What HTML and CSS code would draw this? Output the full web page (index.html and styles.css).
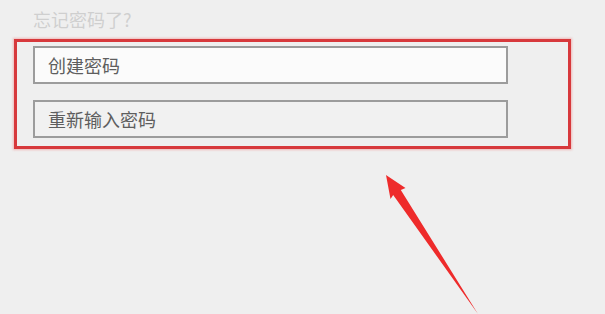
FILE: index.html
```html
<!DOCTYPE html>
<html lang="zh-CN">
<head>
<meta charset="utf-8">
<link rel="stylesheet" href="styles.css">
</head>
<body>
<div class="page">
  <div class="forgot">忘记密码了?</div>
  <div class="highlight">
    <div class="field field-active">创建密码</div>
    <div class="field">重新输入密码</div>
  </div>
  <svg class="arrow" width="605" height="314" viewBox="0 0 605 314">
    <polygon points="386,175 405.5,188 400.8,190 478,314 393.2,195 390.5,199" fill="#ee2b2b"/>
  </svg>
</div>
</body>
</html>
```
FILE: styles.css
```css
html, body {
  margin: 0;
  padding: 0;
  background: #efefef;
}
.page {
  position: relative;
  width: 605px;
  height: 314px;
  overflow: hidden;
  font-family: "Noto Sans CJK SC", "Noto Sans", sans-serif;
}
.forgot {
  padding: 9px 0 10px 33px;
  line-height: 20px;
  font-size: 18px;
  color: #cfcfcf;
}
.highlight {
  margin-left: 14px;
  width: 535px;
  height: 100px;
  border: 3px solid #d7393c;
  box-shadow: 0 0 2px 1px rgba(240, 120, 120, 0.45);
  padding: 4px 0 0 16px;
  box-sizing: content-box;
  display: flex;
  flex-direction: column;
  gap: 16px;
}
.field {
  width: 458px;
  height: 34px;
  border: 2px solid #9c9c9c;
  background: #f1f1f1;
  padding-left: 13px;
  box-sizing: content-box;
  font-size: 18px;
  line-height: 34px;
  color: #5e5e5e;
}
.field-active {
  background: #fbfbfb;
}
.arrow {
  position: absolute;
  left: 0;
  top: 0;
}
```
